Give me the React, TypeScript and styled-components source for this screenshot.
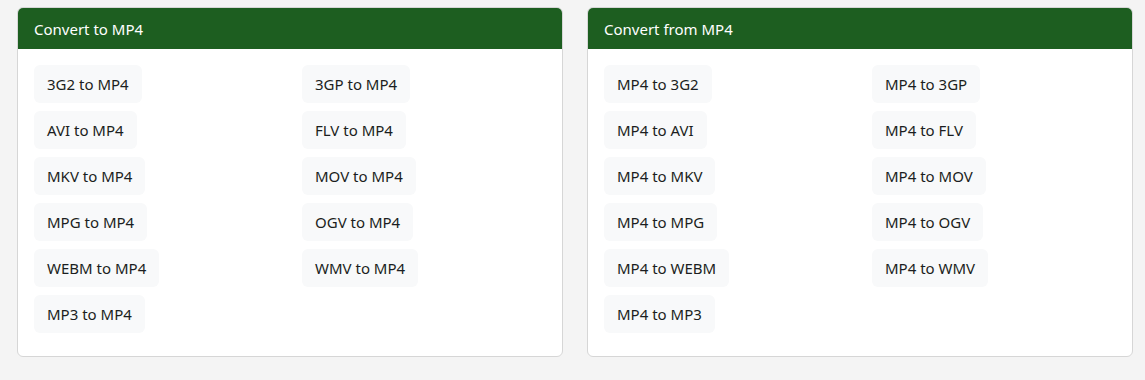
import React from 'react';
import styled, { createGlobalStyle } from 'styled-components';

const GlobalStyle = createGlobalStyle`
  html, body {
    margin: 0;
    padding: 0;
    background: #f4f4f4;
    font-family: "Noto Sans", "Open Sans", sans-serif;
    color: #212529;
  }
`;

const Page = styled.div`
  display: grid;
  grid-template-columns: 1fr 1fr;
  column-gap: 24px;
  padding: 7px 12px 0 17px;
  height: 380px;
  box-sizing: border-box;
  align-items: start;
`;

const Card = styled.div`
  background: #fff;
  border: 1px solid #d6d6d6;
  border-radius: 6px;
  overflow: hidden;
`;

const CardHeader = styled.div`
  background: #1d5e20;
  color: #fff;
  font-size: 15px;
  line-height: 22px;
  padding: 10px 16px 9px;
`;

const CardBody = styled.div`
  padding: 16px 16px 23px 16px;
  display: grid;
  grid-template-columns: 1fr 1fr;
  column-gap: 24px;
  row-gap: 8px;
  justify-items: start;
`;

const LinkButton = styled.a`
  display: inline-block;
  background: #f8f9fa;
  color: #1b1e21;
  font-size: 15px;
  line-height: 24px;
  padding: 7px 13px;
  border-radius: 6px;
  text-decoration: none;
  cursor: pointer;
`;

const formats = ['3G2', '3GP', 'AVI', 'FLV', 'MKV', 'MOV', 'MPG', 'OGV', 'WEBM', 'WMV', 'MP3'];

const App: React.FC = () => {
  return (
    <>
      <GlobalStyle />
      <Page>
        <Card>
          <CardHeader>Convert to MP4</CardHeader>
          <CardBody>
            {formats.map((f) => (
              <LinkButton key={f}>{f} to MP4</LinkButton>
            ))}
          </CardBody>
        </Card>
        <Card>
          <CardHeader>Convert from MP4</CardHeader>
          <CardBody>
            {formats.map((f) => (
              <LinkButton key={f}>MP4 to {f}</LinkButton>
            ))}
          </CardBody>
        </Card>
      </Page>
    </>
  );
};

export default App;
